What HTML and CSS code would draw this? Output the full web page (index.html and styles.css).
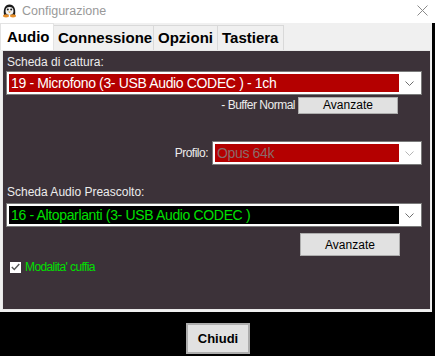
FILE: index.html
```html
<!DOCTYPE html>
<html lang="it">
  <head>
    <meta charset="UTF-8" />
    <meta name="viewport" content="width=device-width, initial-scale=1.0" />
    <title>Configurazione</title>
    <link rel="stylesheet" href="styles.css">
  </head>
  <body>
    <div class="window">
      <div class="titlebar">
        <svg class="app-icon" width="15" height="15" viewBox="0 0 15 15">
          <path d="M2 12 C1 6 3 1.5 7.5 1.5 C12 1.5 14 6 13 12 Z" fill="#1a1a1a" />
          <ellipse cx="7.5" cy="8" rx="4" ry="4" fill="#f2f2f2" />
          <circle cx="5.8" cy="6.5" r="1" fill="#1a1a1a" />
          <circle cx="9.2" cy="6.5" r="1" fill="#1a1a1a" />
          <path d="M6 8.5 L9 8.5 L7.5 10 Z" fill="#e89b2a" />
          <ellipse cx="4" cy="12.8" rx="3" ry="1.6" fill="#e8902a" />
          <ellipse cx="11" cy="12.8" rx="3" ry="1.6" fill="#e8902a" />
        </svg>
        <span class="title">Configurazione</span>
        <svg class="close" width="11" height="11" viewBox="0 0 11 11">
          <path d="M0.5 0.5 L10.5 10.5 M10.5 0.5 L0.5 10.5" stroke="#8a8a8a" stroke-width="1" />
        </svg>
      </div>
      <div class="main">
        <div class="content">
          <div class="tabs">
            <div class="tab active">Audio</div>
            <div class="tab">Connessione</div>
            <div class="tab">Opzioni</div>
            <div class="tab">Tastiera</div>
          </div>
          <div class="panel">
            <div class="label">Scheda di cattura:</div>
            <div class="select">
              <div class="value red">19 - Microfono (3- USB Audio CODEC ) - 1ch</div>
              <div class="chevron">
                <svg width="9" height="5" viewBox="0 0 9 5"><path d="M0.5 0.5 L4.5 4.5 L8.5 0.5" fill="none" stroke="#6f6f6f" /></svg>
              </div>
            </div>
            <div class="buffer-row">
              <span class="small">- Buffer Normal</span>
              <button class="btn btn-small">Avanzate</button>
            </div>
            <div class="profile-row">
              <span class="small">Profilo:</span>
              <div class="select select-profile">
                <div class="value red disabled">Opus 64k</div>
                <div class="chevron">
                  <svg width="9" height="5" viewBox="0 0 9 5"><path d="M0.5 0.5 L4.5 4.5 L8.5 0.5" fill="none" stroke="#b5b5b5" /></svg>
                </div>
              </div>
            </div>
            <div class="label label-gap">Scheda Audio Preascolto:</div>
            <div class="select">
              <div class="value black">16 - Altoparlanti (3- USB Audio CODEC )</div>
              <div class="chevron">
                <svg width="9" height="5" viewBox="0 0 9 5"><path d="M0.5 0.5 L4.5 4.5 L8.5 0.5" fill="none" stroke="#6f6f6f" /></svg>
              </div>
            </div>
            <div class="button-row">
              <button class="btn btn-large">Avanzate</button>
            </div>
            <div class="check-row">
              <span class="checkbox">
                <svg width="9" height="8" viewBox="0 0 9 8"><path d="M0.8 4 L3.3 6.5 L8.3 1" fill="none" stroke="#555" stroke-width="1.4" /></svg>
              </span>
              <span class="check-label">Modalita' cuffia</span>
            </div>
          </div>
        </div>
        <div class="edge"></div>
      </div>
      <div class="footer">
        <button class="btn btn-close">Chiudi</button>
      </div>
    </div>
  </body>
</html>
```

FILE: styles.css
```css
body {
  margin: 0;
  background: #000;
  font-family: "Liberation Sans", Arial, sans-serif;
  overflow: hidden;
}

.window {
  width: 435px;
  height: 356px;
  display: flex;
  flex-direction: column;
}

.titlebar {
  height: 23px;
  background: #fff;
  display: flex;
  align-items: center;
  padding-left: 2px;
}

.app-icon {
  margin-top: -2px;
}

.title {
  margin-left: 5px;
  margin-top: -2px;
  font-size: 12.5px;
  color: #999;
}

.close {
  margin-left: auto;
  margin-right: 7px;
  margin-top: -3px;
}

.main {
  display: flex;
  height: 289px;
}

.content {
  width: 432px;
  background: #f0f0f0;
}

.edge {
  width: 3px;
  background: #000;
}

.tabs {
  display: flex;
  height: 27px;
  align-items: flex-end;
}

.tab {
  box-sizing: border-box;
  height: 25px;
  line-height: 24px;
  padding-left: 4px;
  margin-left: -1px;
  border: 1px solid #d9d9d9;
  border-bottom: none;
  font-size: 15px;
  font-weight: bold;
  color: #000;
}

.tab:nth-child(2) {
  width: 101px;
}

.tab:nth-child(3) {
  width: 65px;
}

.tab:nth-child(4) {
  width: 67px;
}

.tab.active {
  height: 27px;
  line-height: 26px;
  width: 54px;
  margin-left: 0;
  background: #fff;
  padding-left: 6px;
  border-color: #e3e3e3;
  position: relative;
  z-index: 1;
}

.panel {
  height: 258px;
  margin-left: 2px;
  width: 416px;
  border: 1px solid #e8e8e8;
  background: #3c3239;
  padding: 0 8px 0 3px;
  box-sizing: content-box;
  color: #ececec;
}

.panel > * {
  box-sizing: border-box;
}

.label {
  margin-top: 4px;
  height: 14px;
  line-height: 14px;
  font-size: 12px;
  padding-left: 1px;
}

.label-gap {
  margin-top: 20px;
  height: 14px;
}

.select {
  box-sizing: border-box;
  margin-top: 2px;
  height: 24px;
  width: 416px;
  background: #fff;
  border: 1px solid #7a7a7a;
  padding: 2px;
  display: flex;
}

.label + .select {
  margin-top: 2px;
}

.label-gap + .select {
  margin-top: 4px;
}

.value {
  flex: 1;
  font-size: 14px;
  letter-spacing: -0.35px;
  line-height: 18px;
  padding-left: 2px;
  white-space: nowrap;
  overflow: hidden;
}

.value.red {
  background: #b40000;
  color: #fff;
}

.value.black {
  background: #000;
  color: #00e000;
}

.value.disabled {
  color: #8b6a6a;
}

.chevron {
  width: 19px;
  display: flex;
  align-items: center;
  justify-content: center;
  padding-left: 1px;
}

.buffer-row {
  margin-top: 2px;
  display: flex;
  justify-content: flex-end;
  align-items: center;
  padding-right: 24px;
  height: 16px;
}

.small {
  font-size: 12px;
  letter-spacing: -0.5px;
  color: #ececec;
}

.btn {
  font-family: "Liberation Sans", Arial, sans-serif;
  background: #e1e1e1;
  border: 1px solid #adadad;
  color: #000;
  font-size: 12px;
  padding: 0;
}

.btn-small {
  width: 100px;
  height: 17px;
  margin-left: 3px;
  line-height: 14px;
}

.profile-row {
  margin-top: 28px;
  display: flex;
  justify-content: flex-end;
  align-items: center;
  height: 24px;
}

.profile-row .small {
  margin-right: 4px;
}

.select-profile {
  width: 210px;
  margin-top: 0;
}

.button-row {
  margin-top: 6px;
  display: flex;
  justify-content: flex-end;
  padding-right: 22px;
}

.btn-large {
  width: 100px;
  height: 23px;
}

.check-row {
  margin-top: 5px;
  display: flex;
  align-items: center;
  padding-left: 4px;
  height: 12px;
}

.checkbox {
  width: 11px;
  height: 11px;
  background: #fff;
  display: flex;
  align-items: center;
  justify-content: center;
}

.check-label {
  margin-left: 4px;
  font-size: 12px;
  letter-spacing: -0.6px;
  color: #00e000;
}

.footer {
  flex: 1;
  background: #000;
  display: flex;
  justify-content: center;
  padding-top: 11px;
  box-sizing: border-box;
  padding-left: 1px;
}

.btn-close {
  width: 64px;
  height: 31px;
  border: 2px solid #adadad;
  font-size: 13px;
  font-weight: bold;
}
```
